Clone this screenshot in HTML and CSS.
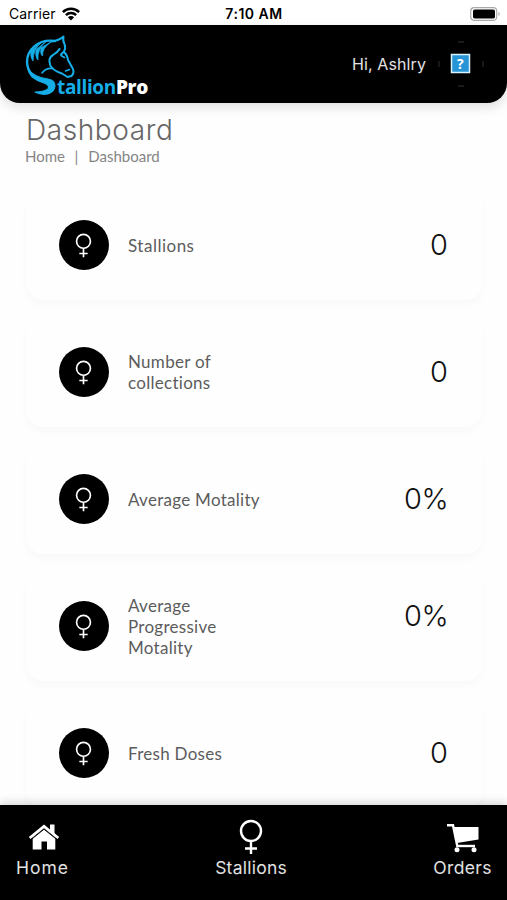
FILE: index.html
```html
<!DOCTYPE html>
<html lang="en">
<head>
<meta charset="utf-8">
<title>StallionPro Dashboard</title>
<link rel="stylesheet" href="styles.css">
</head>
<body>
<svg class="defs" width="0" height="0">
  <symbol id="female" viewBox="0 0 24 36"><circle cx="12" cy="12" r="10"/><path d="M12 22v13M6 29.500h12"/></symbol>
</svg>
<div class="phone">
  <div class="status">
    <div class="carrier"><span>Carrier</span>
      <svg width="18" height="14" viewBox="0 0 18 14" fill="none" stroke="#000" stroke-width="2.500"><path d="M.9 5.100a11.500 11.500 0 0 1 16.200 0M3.900 8.200a7.300 7.300 0 0 1 10.200 0"/><path d="M9 13.500 5.900 10.300a4.400 4.400 0 0 1 6.200 0z" fill="#000" stroke="none"/></svg>
    </div>
    <span class="time">7:10 AM</span>
    <svg class="battery" width="31" height="14" viewBox="0 0 31 14"><rect x=".7" y=".7" width="26" height="12.600" rx="3.500" fill="#fff" stroke="#aaa" stroke-width="1.200"/><rect x="3" y="2.500" width="22" height="9" rx="1.800"/><path d="M28.500 4.800q2.500 2.200 0 4.400z" fill="#aaa"/></svg>
  </div>
  <header class="header">
    <div class="logo">
      <svg class="horse" width="54" height="62" viewBox="0 0 54 62" fill="none" stroke="#16aee8" stroke-width="2" stroke-linecap="round" stroke-linejoin="round">
        <path d="M27 6.500Q34 5.500 38.500 1.500Q37.500 6 39.500 9Q41 13 39 16.500L36 19.500M39 17Q42.500 20 43 25L48 34Q49.500 38 46.500 41L42.500 42L37 38.500Q29 36 25.500 31Q22.500 23 28 20Q33 17 34.500 14" />
        <path d="M30 6C13 3.500 2 15 2 27C2.500 36 8 43 18 46" stroke-width="2.400"/>
        <path d="M17 38Q21 32.500 28 33.500M36 20.500L39.500 22.500M40.500 36L44.500 34.500" stroke-width="1.600"/>
        <path d="M16 8Q8 14 8 26Q5 22 6 16ZM21 6.500Q12 14 13 25Q10 22 11 15ZM26 7Q17 13 17.500 21Q15 19 16 13Z" fill="#16aee8" stroke-width=".8"/>
        <path d="M3 34C8 41 15 43 23 44Q30 45 30 51C29 60 18 61 10 57Q19 57 23 54Q25 50 19 48C10 45 5 42 3 34Z" fill="#16aee8" stroke-width="1.200"/>
      </svg>
      <span class="wordmark">tallion<b>Pro</b></span>
    </div>
    <div class="user"><span>Hi, Ashlry</span>
      <div class="avatar">
        <svg width="46" height="46" viewBox="0 0 46 46"><path d="M20 1h6M20 45h6M1 20v6M45 20v6" stroke="#333"/><rect x="13.500" y="13.500" width="18" height="18" fill="#2795d5" stroke="#d9f2ff" stroke-width="1.500"/></svg><b>?</b>
      </div>
    </div>
  </header>
  <main class="main">
    <h1>Dashboard</h1>
    <nav class="crumbs"><span>Home</span><i>|</i><span>Dashboard</span></nav>
    <section class="cards">
      <article class="card"><div class="disc"><svg><use href="#female"/></svg></div><p class="t1">Stallions</p><strong>0</strong></article>
      <article class="card"><div class="disc"><svg><use href="#female"/></svg></div><p>Number of<br>collections</p><strong>0</strong></article>
      <article class="card"><div class="disc"><svg><use href="#female"/></svg></div><p>Average Motality</p><strong class="pct">0%</strong></article>
      <article class="card"><div class="disc"><svg><use href="#female"/></svg></div><p>Average<br>Progressive<br>Motality</p><strong class="pct raised">0%</strong></article>
      <article class="card"><div class="disc"><svg><use href="#female"/></svg></div><p>Fresh Doses</p><strong>0</strong></article>
    </section>
  </main>
  <footer class="tabs">
    <a class="tab home"><svg width="32" height="36" viewBox="0 0 32 36" fill="#fff"><path d="M16 10 27.300 19V30.500H19V22.500H13.500V30.500H4.700V19Z"/><path d="M1.700 19 16 7.300 30.300 19" fill="none" stroke="#fff" stroke-width="2.800"/><path d="M3.500 20.300 16 10.200 28.500 20.300" fill="none" stroke="#000" stroke-width="1"/><path d="M22 5.500h4.500v10L22 12z"/></svg><span>Home</span></a>
    <a class="tab stal"><svg class="venus" width="24" height="36"><use href="#female"/></svg><span>Stallions</span></a>
    <a class="tab orders"><svg width="34" height="36" viewBox="0 0 34 36" fill="none" stroke="#fff" stroke-width="2.400"><path d="M1 6.300H7L11.500 28"/><path d="M8 8H32.500V20.500L11 24Z" fill="#fff" stroke="none"/><path d="M11 27H29" stroke-width="2.400"/><circle cx="11" cy="30.800" r="2.500" fill="#fff" stroke="none"/><circle cx="28" cy="30.800" r="2.500" fill="#fff" stroke="none"/></svg><span>Orders</span></a>
  </footer>
</div>
</body>
</html>
```
FILE: styles.css
```css
* { box-sizing: border-box; }
body { margin: 0; background: #fff; font-family: Inter, "Liberation Sans", sans-serif; }
.defs { position: absolute; }
.phone { width: 507px; height: 900px; overflow: hidden; display: flex; flex-direction: column; background: #fefefe; }
.status { height: 25px; flex: none; display: grid; grid-template-columns: 1fr auto 1fr; align-items: center; padding: 2px 6px 0 9px; font-size: 14px; line-height: 24px; background: #fff; }
.carrier { display: flex; align-items: center; gap: 6px; letter-spacing: .12px; }
.time { font-weight: 600; letter-spacing: .5px; margin-right: 2px; }
.battery { justify-self: end; }
.header { height: 78px; flex: none; background: #000; border-radius: 0 0 20px 20px; box-shadow: 0 4px 12px rgba(0,0,0,.13); display: flex; justify-content: space-between; padding: 9px 23px 0 25px; color: #e2e2e2; }
.logo { display: flex; align-items: flex-end; height: 63px; }
.horse { flex: none; }
.wordmark { margin-left: -22px; color: #16aee8; font: 700 19px/20px "Open Sans", sans-serif; white-space: nowrap; letter-spacing: -.35px; }
.wordmark b { color: #fff; font-weight: 800; }
.user { display: flex; align-items: center; gap: 12px; height: 60px; font-size: 16px; white-space: nowrap; font-weight: 400; letter-spacing: .1px; }
.avatar { display: grid; width: 46px; height: 46px; }
.avatar > * { grid-area: 1 / 1; }
.avatar b { place-self: center; margin-right: 1px; font: 700 14px/14px "Open Sans", sans-serif; color: #fff; }
.main { flex: 1; min-height: 0; overflow: hidden; padding: 12px 24px 0 25px; }
h1 { margin: 0 0 0 1px; font-size: 28px; line-height: 31px; font-weight: 300; color: #666; letter-spacing: .6px; }
.crumbs { display: flex; height: 21px; font: 15px/21px Lato, sans-serif; color: #858585; }
.crumbs i { font-style: normal; margin: 0 10px 0 9.500px; }
.cards { display: grid; grid-auto-rows: 110px; gap: 17px; margin: 23px 0 0 1px; }
.card { display: flex; align-items: center; padding: 0 35px 0 33px; border-radius: 18px; background: #fefefe; box-shadow: 0 5px 8px rgba(0,0,0,.022); }
.disc { flex: none; display: grid; place-items: center; width: 50px; height: 50px; border-radius: 50%; background: #000; padding: 0 2px 0 0; }
.disc svg { width: 17px; height: 25px; stroke-width: 2.400; }
.disc svg, .venus { fill: none; stroke: #fff; }
.venus { stroke-width: 2.400; }
.card p { margin: 0 0 0 19px; flex: 1; font: 17px/21px Lato, sans-serif; color: #5c5c5c; letter-spacing: .28px; }
.card .t1 { letter-spacing: .5px; }
.card strong { font: 300 29px/36px Inter, sans-serif; color: #111; }
.card .pct { letter-spacing: -.6px; }
.card .raised { align-self: flex-start; margin-top: 27px; }
.tabs { flex: none; height: 95px; background: #000; color: #e2e2e2; display: flex; justify-content: space-between; padding: 14px 15px 0 16px; box-shadow: 0 -3px 8px rgba(0,0,0,.15); position: relative; }
.tab { display: flex; flex-direction: column; align-items: center; font-size: 17.500px; line-height: 25px; }
.home { letter-spacing: 1px; }
.stal { letter-spacing: .25px; }
.orders { letter-spacing: .4px; }
.home svg { margin-left: 2px; }
```
